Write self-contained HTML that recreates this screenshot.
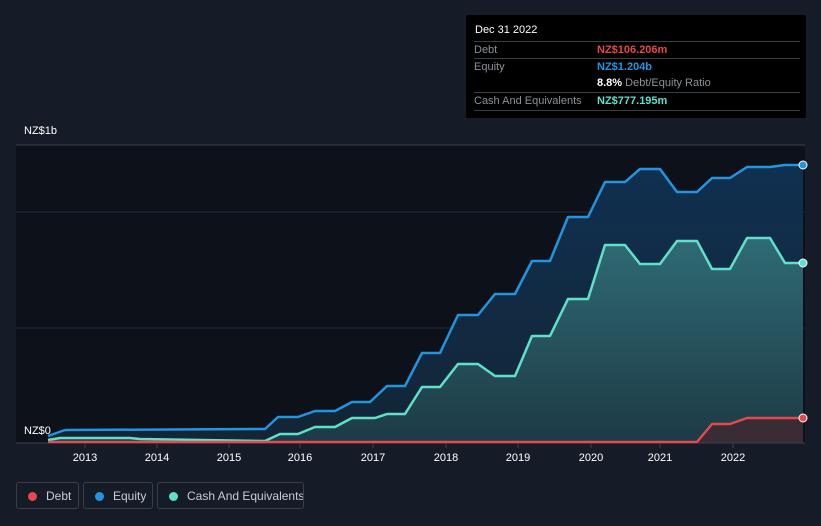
<!DOCTYPE html><html><head><style>
html,body{margin:0;width:821px;height:526px;overflow:hidden}
body{background:#161c27;font-family:"Liberation Sans",sans-serif;position:relative}
.t{position:absolute;font-size:11px;color:#fff}
.box{position:absolute;left:466px;top:15px;width:340px;height:103px;background:#000;border-radius:2px}
.row{position:absolute;left:8px;width:326px;border-top:1px solid #3a3f47;font-size:11px;color:#8c9198;height:17px;line-height:17px;white-space:nowrap}
.leg{position:absolute;top:482px;height:27px;border:1px solid #3a3f47;border-radius:3px;color:#c8ccd2;font-size:12px;line-height:27px;box-sizing:border-box;white-space:nowrap;overflow:hidden}
.dot{display:inline-block;width:9px;height:9px;border-radius:50%;margin:0 9px 0 11px;vertical-align:-1px}
</style></head><body>
<svg width="821" height="526" style="position:absolute;left:0;top:0">
<defs><linearGradient id="g1" x1="0" y1="0" x2="0" y2="1"><stop offset="0" stop-color="#103050"/><stop offset="1" stop-color="#132536"/></linearGradient>
<linearGradient id="g2" x1="0" y1="0" x2="0" y2="1"><stop offset="0" stop-color="#2f6b74"/><stop offset="1" stop-color="#1d3a45"/></linearGradient></defs>
<rect x="16" y="145" width="789" height="298" fill="#0d1119"/>
<line x1="16" y1="145" x2="805" y2="145" stroke="#3a3f47"/>
<line x1="16" y1="212" x2="805" y2="212" stroke="#232a36"/>
<line x1="16" y1="328" x2="805" y2="328" stroke="#232a36"/>
<path d="M48 436 L65 430 L265 429 L278 417 L298 417 L315 411 L335 411 L352 402 L370 402 L387 386 L405 386 L422 353 L440 353 L458 315 L478 315 L495 294 L515 294 L532 261 L550 261 L568 217 L588 217 L605 182 L625 182 L640 169 L660 169 L677 192 L697 192 L712 178 L730 178 L747 167 L770 167 L785 165 L803 165 L803 443 L48 443Z" fill="url(#g1)"/>
<path d="M48 440 L60 438 L130 438 L140 439 L265 441 L280 434 L298 434 L315 427 L335 427 L352 418 L375 418 L387 414 L405 414 L422 387 L440 387 L458 364 L478 364 L495 376 L515 376 L532 336 L550 336 L568 299 L588 299 L605 245 L625 245 L640 264 L660 264 L677 241 L697 241 L712 269 L730 269 L747 238 L770 238 L785 263 L803 263 L803 443 L48 443Z" fill="url(#g2)"/>
<path d="M697 442 L712 424 L730 424 L747 418 L803 418 L803 443 L697 443Z" fill="#3a2c34"/>
<line x1="16" y1="443" x2="805" y2="443" stroke="#3a3f47"/>
<g fill="none" stroke-width="2.5" stroke-linejoin="round">
<path d="M48 436 L65 430 L265 429 L278 417 L298 417 L315 411 L335 411 L352 402 L370 402 L387 386 L405 386 L422 353 L440 353 L458 315 L478 315 L495 294 L515 294 L532 261 L550 261 L568 217 L588 217 L605 182 L625 182 L640 169 L660 169 L677 192 L697 192 L712 178 L730 178 L747 167 L770 167 L785 165 L803 165" stroke="#2394df"/>
<path d="M48 440 L60 438 L130 438 L140 439 L265 441 L280 434 L298 434 L315 427 L335 427 L352 418 L375 418 L387 414 L405 414 L422 387 L440 387 L458 364 L478 364 L495 376 L515 376 L532 336 L550 336 L568 299 L588 299 L605 245 L625 245 L640 264 L660 264 L677 241 L697 241 L712 269 L730 269 L747 238 L770 238 L785 263 L803 263" stroke="#5fe0cb"/>
<path d="M48 442 L697 442 L712 424 L730 424 L747 418 L803 418" stroke="#e5484d"/>
</g>
<circle cx="803" cy="165" r="4" fill="#2394df" stroke="#fff" stroke-width="1"/>
<circle cx="803" cy="263" r="4" fill="#5fe0cb" stroke="#fff" stroke-width="1"/>
<circle cx="803" cy="418" r="4" fill="#e5484d" stroke="#fff" stroke-width="1"/>
<g stroke="#3a3f47"><line x1="85" y1="443" x2="85" y2="448"/><line x1="157" y1="443" x2="157" y2="448"/><line x1="229" y1="443" x2="229" y2="448"/><line x1="300" y1="443" x2="300" y2="448"/><line x1="373" y1="443" x2="373" y2="448"/><line x1="446" y1="443" x2="446" y2="448"/><line x1="518" y1="443" x2="518" y2="448"/><line x1="591" y1="443" x2="591" y2="448"/><line x1="660" y1="443" x2="660" y2="448"/><line x1="733" y1="443" x2="733" y2="448"/></g>
<g fill="#fff" font-size="11" text-anchor="middle" font-family="Liberation Sans"><text x="85" y="461">2013</text><text x="157" y="461">2014</text><text x="229" y="461">2015</text><text x="300" y="461">2016</text><text x="373" y="461">2017</text><text x="446" y="461">2018</text><text x="518" y="461">2019</text><text x="591" y="461">2020</text><text x="660" y="461">2021</text><text x="733" y="461">2022</text></g>
</svg>
<div class="t" style="left:24px;top:125px">NZ$1b</div>
<div class="t" style="left:24px;top:425px">NZ$0</div>
<div class="box">
<div style="position:absolute;left:9px;top:9px;font-size:11px;color:#fff">Dec 31 2022</div>
<div class="row" style="top:26px">Debt<span style="position:absolute;left:123px;color:#e5484d;font-weight:bold">NZ$106.206m</span></div>
<div class="row" style="top:43px">Equity<span style="position:absolute;left:123px;color:#2394df;font-weight:bold">NZ$1.204b</span></div>
<div class="row" style="top:60px;border-top:none"><span style="position:absolute;left:123px"><b style="color:#fff">8.8%</b> Debt/Equity Ratio</span></div>
<div class="row" style="top:77px">Cash And Equivalents<span style="position:absolute;left:123px;color:#5fe0cb;font-weight:bold">NZ$777.195m</span></div>
<div style="position:absolute;left:8px;top:95px;width:326px;border-top:1px solid #3a3f47"></div>
</div>
<div class="leg" style="left:16px;width:63px"><span class="dot" style="background:#e5484d"></span>Debt</div>
<div class="leg" style="left:83px;width:70px"><span class="dot" style="background:#2394df"></span>Equity</div>
<div class="leg" style="left:157px;width:147px"><span class="dot" style="background:#5fe0cb"></span>Cash And Equivalents</div>
</body></html>
